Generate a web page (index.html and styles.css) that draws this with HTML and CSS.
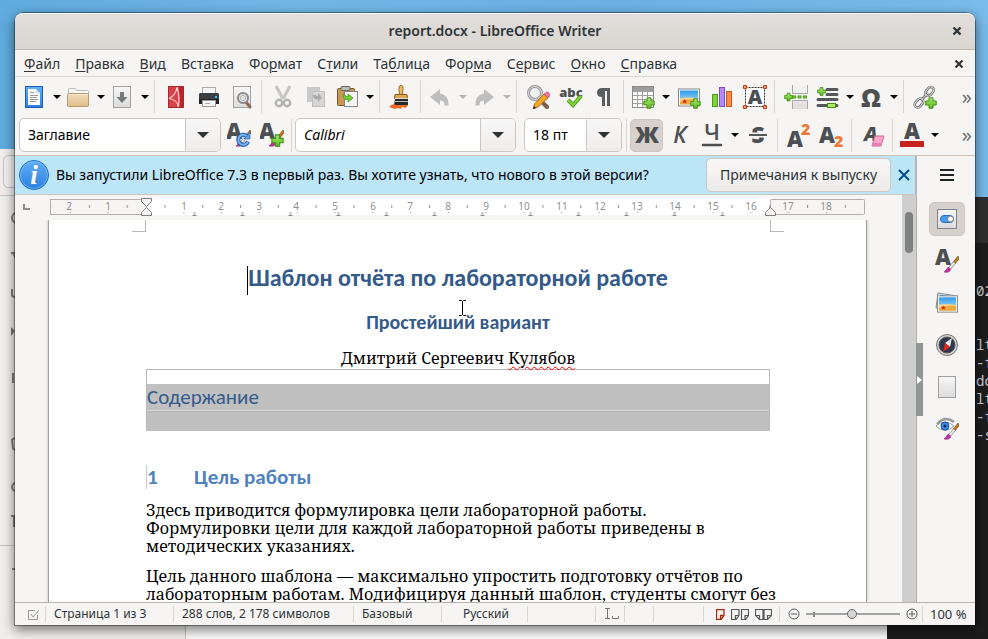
FILE: index.html
```html
<!DOCTYPE html>
<html lang="ru">
<head>
<meta charset="utf-8">
<title>report.docx - LibreOffice Writer</title>
<link rel="stylesheet" href="styles.css">
</head>
<body>
<svg class="defs" width="0" height="0" aria-hidden="true">
  <defs>
    <linearGradient id="g-paper" x1="0" y1="0" x2="0" y2="1"><stop offset="0" stop-color="#fff"/><stop offset="1" stop-color="#e4e4e4"/></linearGradient>
    <linearGradient id="g-gray" x1="0" y1="0" x2="0" y2="1"><stop offset="0" stop-color="#f6f6f6"/><stop offset="1" stop-color="#dcdcdc"/></linearGradient>
    <linearGradient id="g-blue" x1="0" y1="0" x2="0" y2="1"><stop offset="0" stop-color="#62b0f5"/><stop offset="1" stop-color="#2b7fe0"/></linearGradient>
    <linearGradient id="g-sky" x1="0" y1="0" x2="0" y2="1"><stop offset="0" stop-color="#2d9be8"/><stop offset="1" stop-color="#bfe6fa"/></linearGradient>
    <linearGradient id="g-folder" x1="0" y1="0" x2="0" y2="1"><stop offset="0" stop-color="#f3dfbd"/><stop offset="1" stop-color="#dfbd8c"/></linearGradient>
    <linearGradient id="g-green" x1="0" y1="0" x2="0" y2="1"><stop offset="0" stop-color="#a6e86a"/><stop offset="1" stop-color="#5cb81f"/></linearGradient>
    <symbol id="plus" viewBox="0 0 12 12"><path d="M4 .8h4V4h3.200v4H8v3.200H4V8H.8V4H4z" fill="url(#g-green)" stroke="#3f8f14" stroke-width="1"/></symbol>
    <symbol id="brush" viewBox="0 0 16 18"><path d="M15 0 10 6l2 2 4-5z" fill="#c8741a" stroke="#6b3a0c" stroke-width=".6"/><path d="M10 6 5 12l2 2 5-6z" fill="#e8e8e8" stroke="#777" stroke-width=".7"/><path d="M5 12c-2 0-2 3-5 5 3 1 7 0 7-3z" fill="#c22fa5" stroke="#7d1a69" stroke-width=".5"/></symbol>
    <symbol id="beach" viewBox="0 0 22 18"><rect x=".5" y=".5" width="21" height="17" fill="#fff" stroke="#888"/><rect x="2" y="2" width="18" height="14" fill="url(#g-sky)"/><path d="M2 11q9-2 18-1v6H2z" fill="#f0a93c"/><path d="M2 10q5-2 18 0v1q-9-1-18 2z" fill="#f8d38c"/><path d="M6.500 10.500l1 1.500 1.800.2-1.300 1.200.4 1.600-1.900-.8-1.500.8.3-1.700-1.300-1.100 1.700-.3z" fill="#d8331c"/></symbol>
  </defs>
</svg>

<div class="backdrop-files" aria-hidden="true">
  <svg width="15" height="490"><path d="M0 46.500h15M0 396.500h15" stroke="#c9c7c5"/><rect x="3.500" y="6.500" width="24" height="32" rx="5" fill="#f3f1f0" stroke="#c4c0bb"/><g fill="none" stroke="#808080" stroke-width="2"><circle cx="17" cy="69" r="5"/><path d="M11 104h5M13 104l3 5M12 140v6q0 2 3 2M13 224v10M12 291q1-2 6-2v12q-5 0-5-2zM11 367h5M14 368v10M12 420h4"/><circle cx="16" cy="338" r="4"/></g><path d="M11 178l4 4-4 5z" fill="#777"/></svg>
</div>
<div class="backdrop-bottom" aria-hidden="true"></div>
<div class="terminal"><pre>02


lt
-f
do
lt
-f
-s</pre></div>

<main class="window">
  <header class="titlebar">
    <h1>report.docx - LibreOffice Writer</h1>
    <button class="close" aria-label="Закрыть"><svg width="10" height="10"><path d="M1.500 1.500l7 7M8.500 1.500l-7 7" stroke="#2e3436" stroke-width="2.400"/></svg></button>
  </header>
  <nav class="menubar">
    <button><u>Ф</u>айл</button><button><u>П</u>равка</button><button><u>В</u>ид</button><button>Вст<u>а</u>вка</button><button>Фо<u>р</u>мат</button><button>С<u>т</u>или</button><button>Та<u>б</u>лица</button><button>Фор<u>м</u>а</button><button>С<u>е</u>рвис</button><button><u>О</u>кно</button><button><u>С</u>правка</button>
    <button class="close" aria-label="Закрыть документ"><svg width="10" height="10"><path d="M1.500 1.500l7 7M8.500 1.500l-7 7" stroke="#2e3436" stroke-width="2.200"/></svg></button>
  </nav>

  <div class="toolbar toolbar-main">
    <button class="tool split" aria-label="Создать"><svg width="24" height="24"><rect x="3.500" y="1.500" width="17" height="21" fill="url(#g-blue)" stroke="#1b5db0"/><path d="M6 4h8l4 4v12H6z" fill="#fff"/><path d="M14 4v4h4z" fill="#c8dff5"/><path d="M8 7.500h4M8 10.500h8M8 12.500h7M8 14.500h8M8 16.500h6" stroke="#999"/></svg><i></i></button>
    <button class="tool split" aria-label="Открыть"><svg width="24" height="24"><path d="M2.500 10V4.500q0-1 1-1h6l1 2h11q1 0 1 1V10z" fill="#fafafa" stroke="#b9b9b9"/><rect x="1.500" y="8.500" width="21" height="13" rx="1" fill="url(#g-folder)" stroke="#b99766"/><path d="M3 9.500h18" stroke="#faecd4"/></svg><i></i></button>
    <button class="tool split" aria-label="Сохранить"><svg width="24" height="24"><rect x="3.500" y="1.500" width="17" height="21" fill="url(#g-gray)" stroke="#a2a2a2"/><path d="M10 7h4v5h3.500L12 18l-5.500-6H10z" fill="#76797c"/></svg><i></i></button>
    <span class="sep"></span>
    <button class="tool" aria-label="PDF"><svg width="24" height="24"><rect x="4.500" y="1.500" width="15" height="21" fill="#d8434a" stroke="#a3272e"/><path d="M14.500 2h4.500v20h-4.500q2-10 0-20z" fill="#c1222a"/><path d="M5 13.500q7-3 8-11.500M5 13.500q8 1 9.500 8.500M13 2q3 10 1.500 20" fill="none" stroke="#fbd5d5" stroke-width="1.200"/></svg></button>
    <button class="tool" aria-label="Печать"><svg width="24" height="24"><rect x="5.500" y="2.500" width="13" height="8" fill="#f5f5f5" stroke="#aaa"/><path d="M3 8h18q1 0 1 2v9H2v-9q0-2 1-2z" fill="#3b3f42"/><path d="M2 14h20v5H2z" fill="#222426"/><rect x="18" y="11" width="2" height="2" fill="#25c5f5"/><rect x="5.500" y="15.500" width="13" height="6" fill="#f7f7f7" stroke="#999"/><path d="M8 18.500h5" stroke="#aaa"/></svg></button>
    <button class="tool" aria-label="Просмотр печати"><svg width="24" height="24"><rect x="3.500" y="1.500" width="17" height="21" fill="url(#g-gray)" stroke="#a2a2a2"/><path d="M16 17l4 5" stroke="#8b6b56" stroke-width="3" stroke-linecap="round"/><circle cx="13" cy="13" r="5" fill="#ececec" stroke="#8a8a8a" stroke-width="2"/><circle cx="13" cy="13" r="2.500" fill="none" stroke="#aaa"/></svg></button>
    <span class="sep"></span>
    <button class="tool" disabled aria-label="Вырезать"><svg width="24" height="24"><path d="M5 1l7 13M19 1l-7 13" stroke="#c4c4c4" stroke-width="3"/><g fill="none" stroke="#b2b2b2" stroke-width="2.400"><circle cx="8" cy="18" r="3.200"/><circle cx="16" cy="18" r="3.200"/></g></svg></button>
    <button class="tool" disabled aria-label="Копировать"><svg width="24" height="24"><rect x="3" y="2" width="13" height="15" fill="#c9c9c9"/><rect x="8.500" y="6.500" width="12" height="15" fill="#d6d6d6" stroke="#c0c0c0"/><path d="M9 10q0 5 5 4v3l4-4.500L14 8v3q-2 1-2-1z" fill="#aaa"/></svg></button>
    <button class="tool split" aria-label="Вставить"><svg width="24" height="24"><rect x="2.500" y="3.500" width="17" height="17" rx="1" fill="#c99752" stroke="#7b5423"/><rect x="6" y="1.500" width="9" height="4" rx="1" fill="#bbb" stroke="#666"/><rect x="9.500" y="6.500" width="13" height="15" fill="#f4f4f4" stroke="#888"/><path d="M8 10q1 6 5 4v3l5-4-5-4v2.500q-3 1-3-1.500z" fill="#6fd12f" stroke="#3f9113" stroke-width=".7"/></svg><i></i></button>
    <span class="sep"></span>
    <button class="tool" aria-label="Копировать форматирование"><svg width="24" height="24"><path d="M12 .5q2.500 0 2 3L13.500 10h-3L10 3.500q-.5-3 2-3z" fill="#e8bb6b" stroke="#9b6b23"/><path d="M6 9.500h12l.5 4h-13z" fill="#e0a94e" stroke="#8b5f1c"/><path d="M6 13h13v3H6z" fill="#ddd"/><path d="M6 14h13v6H5z" fill="#26282a"/><path d="M6 16h13v1H6z" fill="#bbb"/><path d="M0 22q3-4 7-2h12l-2 3-4-1-1 2-3-1-3 1z" fill="#f06a26"/></svg></button>
    <span class="sep"></span>
    <button class="tool split" disabled aria-label="Отменить"><svg width="24" height="24"><path d="M2 12l10-8v4.500q9 1 8.500 12h-4q.5-5-4.500-5V20z" fill="#bebebe"/></svg><i></i></button>
    <button class="tool split" disabled aria-label="Вернуть"><svg width="24" height="24"><path d="M22 12L12 4v4.500q-9 1-8.500 12h4q-.5-5 4.500-5V20z" fill="#bebebe"/></svg><i></i></button>
    <span class="sep"></span>
    <button class="tool" aria-label="Найти и заменить"><svg width="24" height="24"><path d="M14 15l7 7" stroke="#7b5d50" stroke-width="4" stroke-linecap="round"/><circle cx="9" cy="8" r="6.500" fill="#efefef" stroke="#999" stroke-width="3"/><circle cx="9" cy="8" r="6.500" fill="none" stroke="#ddd"/><path d="M7 24l1.500-5L18 9l4 4L12 22z" fill="#f5a623" stroke="#9a5d10" stroke-width=".8"/><path d="M18 9l2.500-2q3 0 3.500 3.500L22 13z" fill="#f078a8" stroke="#aa3b68" stroke-width=".6"/><path d="M7 24l1-3 2 2z" fill="#222"/></svg></button>
    <button class="tool" aria-label="Орфография"><svg width="24" height="24" overflow="visible"><text x="12" y="12" class="glyph abc" text-anchor="middle">abc</text><path d="M9 15l5 5 8-9" fill="none" stroke="#4f9e18" stroke-width="4"/><path d="M9 15l5 5 8-9" fill="none" stroke="#83d63f" stroke-width="2"/></svg></button>
    <button class="tool" aria-label="Непечатаемые символы"><svg width="24" height="24"><path d="M18 3v18h-3V6h-2v15h-3v-9q-5 0-5-4.500T10 3z" fill="#5a5d60"/></svg></button>
    <span class="sep"></span>
    <button class="tool split" aria-label="Таблица"><svg width="24" height="24"><rect x="1.500" y="1.500" width="21" height="21" fill="#fff" stroke="#8c8c8c"/><path d="M2 2h20v4H2z" fill="#9a9da0"/><path d="M2 6.500h20M2 10.500h20M2 14.500h20M2 18.500h20M6.500 2v20M11.500 2v20M16.500 2v20" stroke="#a0a0a0"/><use href="#plus" x="12" y="12" width="12" height="12"/></svg><i></i></button>
    <button class="tool" aria-label="Изображение"><svg width="24" height="24"><use href="#beach" x="1" y="3" width="22" height="19"/><use href="#plus" x="13" y="13" width="11" height="11"/></svg></button>
    <button class="tool" aria-label="Диаграмма"><svg width="24" height="24"><rect x="2.500" y="9.500" width="5" height="12" fill="#80d040" stroke="#4b9a1c"/><rect x="9.500" y="2.500" width="5" height="19" fill="#b58af5" stroke="#7f50c4"/><rect x="16.500" y="6.500" width="5" height="15" fill="#fa8a45" stroke="#cc5818"/></svg></button>
    <button class="tool" aria-label="Надпись"><svg width="24" height="24"><rect x="2.500" y="2.500" width="19" height="19" fill="#fff" stroke="#333" stroke-dasharray="2 1"/><text x="12" y="19" class="glyph a" text-anchor="middle">A</text><g fill="#f59a70" stroke="#c43d10"><path d="M.5.500h3v3h-3zM20.500.500h3v3h-3zM.5 20.500h3v3h-3zM20.500 20.500h3v3h-3z"/></g></svg></button>
    <span class="sep"></span>
    <button class="tool" aria-label="Разрыв страницы"><svg width="24" height="24"><path d="M8.500 0v8.500h15V0M8.500 24v-8.500h15V24" fill="url(#g-gray)" stroke="#aaa"/><path d="M8 12h16" stroke="#4a9a18" stroke-width="3" stroke-dasharray="4 1.500"/><path d="M9 12h15" stroke="#92dd52" stroke-width="1" stroke-dasharray="2 3.500"/><use href="#plus" x="0" y="7" width="9" height="10"/></svg></button>
    <button class="tool split" aria-label="Поле"><svg width="24" height="24"><path d="M12 4.500h10M12 9.500h10M3 14.500h19M3 20.500h19" stroke="#55585b" stroke-width="3" stroke-linecap="round"/><rect x="12.500" y="18.500" width="8" height="4" fill="#a8ec6d" stroke="#459014"/><use href="#plus" x="2" y="2" width="9" height="9"/></svg><i></i></button>
    <button class="tool split" aria-label="Специальный символ"><svg width="24" height="24"><text x="12" y="22" class="glyph omega" text-anchor="middle">Ω</text></svg><i></i></button>
    <span class="sep"></span>
    <button class="tool" aria-label="Гиперссылка"><svg width="24" height="24"><g fill="none" stroke="#6f7274" stroke-width="2.600"><rect x="-5" y="-3" width="10" height="6" rx="3" transform="translate(6 18) rotate(-50)"/><rect x="-5" y="-3" width="10" height="6" rx="3" transform="translate(16.500 6.500) rotate(-50)"/><path d="M8 15.500l7-7.500"/></g><g fill="none" stroke="#d4d4d4"><rect x="-5" y="-3" width="10" height="6" rx="3" transform="translate(6 18) rotate(-50)"/><rect x="-5" y="-3" width="10" height="6" rx="3" transform="translate(16.500 6.500) rotate(-50)"/><path d="M8 15.500l7-7.500"/></g><use href="#plus" x="12" y="12" width="12" height="12"/></svg></button>
    <button class="more" aria-label="Ещё">»</button>
  </div>

  <div class="toolbar toolbar-format">
    <div class="combo combo-style"><input aria-label="Стиль абзаца" value="Заглавие"><button aria-label="Показать стили"><i></i></button></div>
    <button class="tool" aria-label="Обновить стиль"><svg width="24" height="24"><text x="-1" y="16" class="glyph big">A</text><use href="#brush" x="9" y="7" width="15" height="17"/><path d="M20 13.500a5 5 0 1 0 1 5" fill="none" stroke="#2260b4" stroke-width="4"/><path d="M20 13.500a5 5 0 1 0 1 5" fill="none" stroke="#79b4f5" stroke-width="2"/><path d="M23 9v7h-6z" fill="#5b9de8" stroke="#2260b4" stroke-width=".6"/></svg></button>
    <button class="tool" aria-label="Создать стиль"><svg width="24" height="24"><text x="-1" y="16" class="glyph big">A</text><use href="#brush" x="9" y="7" width="15" height="17"/><use href="#plus" x="11" y="11" width="13" height="13"/></svg></button>
    <span class="sep"></span>
    <div class="combo combo-font"><input aria-label="Гарнитура" value="Calibri"><button aria-label="Показать шрифты"><i></i></button></div>
    <div class="combo combo-size"><input aria-label="Кегль" value="18 пт"><button aria-label="Показать размеры"><i></i></button></div>
    <span class="sep"></span>
    <button class="tool pressed" aria-label="Полужирный"><svg width="24" height="24" overflow="visible"><text x="12" y="20" class="glyph letter" text-anchor="middle">Ж</text></svg></button>
    <button class="tool" aria-label="Курсив"><svg width="24" height="24"><text x="11" y="20" class="glyph letter italic" text-anchor="middle">К</text></svg></button>
    <button class="tool split" aria-label="Подчёркнутый"><svg width="24" height="24"><text x="12" y="17" class="glyph letter plain" text-anchor="middle">Ч</text><path d="M3 22h18" stroke="#4d5052" stroke-width="2.500" stroke-linecap="round"/></svg><i></i></button>
    <button class="tool" aria-label="Зачёркнутый"><svg width="24" height="24"><text x="12" y="20" class="glyph letter" text-anchor="middle">S</text><path d="M3 12h18" stroke="#f6f5f4" stroke-width="5"/><path d="M3 12h18" stroke="#55585b" stroke-width="2"/></svg></button>
    <span class="sep"></span>
    <button class="tool" aria-label="Надстрочный"><svg width="24" height="24" overflow="visible"><text x="0" y="24" class="glyph big">A</text><text x="14" y="12" class="glyph two">2</text></svg></button>
    <button class="tool" aria-label="Подстрочный"><svg width="24" height="24" overflow="visible"><text x="-1" y="20" class="glyph big">A</text><text x="14" y="24" class="glyph two">2</text></svg></button>
    <span class="sep"></span>
    <button class="tool" aria-label="Очистить"><svg width="24" height="24"><text x="3" y="18" class="glyph a italic">A</text><path d="M14 13h9l-3 10h-9z" fill="#f7a5c8" stroke="#d0689a" stroke-linejoin="round"/><path d="M11 20h10l-1 3h-9z" fill="#e87fb0"/></svg></button>
    <span class="sep"></span>
    <button class="tool split" aria-label="Цвет шрифта"><svg width="24" height="24"><text x="12" y="16" class="glyph big" text-anchor="middle">A</text><rect x="0" y="18" width="24" height="6" fill="#c9211e"/></svg><i></i></button>
    <button class="more" aria-label="Ещё">»</button>
  </div>

  <div class="body">
    <div class="content">
      <div class="infobar">
        <svg width="32" height="32"><circle cx="16" cy="16" r="14.500" fill="url(#g-blue)" stroke="#1d6cc9"/><circle cx="16" cy="16" r="13.500" fill="none" stroke="#8cc5f8" stroke-opacity=".6"/><text x="16" y="25" text-anchor="middle" class="info-i">i</text></svg>
        <p>Вы запустили LibreOffice 7.3 в первый раз. Вы хотите узнать, что нового в этой версии?</p>
        <button class="notes">Примечания к выпуску</button>
        <button class="dismiss" aria-label="Закрыть"><svg width="14" height="14"><path d="M2 2l10 10M12 2L2 12" stroke="#004c8c" stroke-width="2"/></svg></button>
      </div>
      <div class="edit">
        <div class="view">
          <svg class="ruler" width="856" height="25">
            <defs>
              <pattern id="half" x="131.500" y="0" width="37.800" height="25" patternUnits="userSpaceOnUse"><path d="M18.500 10v3" stroke="#8f8f8f"/><path d="M37.300 3v1M37.300 17v1" stroke="#999"/></pattern>
              <pattern id="tabs" x="131.500" y="0" width="48" height="25" patternUnits="userSpaceOnUse"><path d="M48 17v4M0 17v4M0 20.500h2M46 20.500h2" stroke="#8a8a8a"/></pattern>
            </defs>
            <path d="M9 9v5h6" stroke="#8f8f8f" stroke-width="2" fill="none"/>
            <rect x="131" y="3" width="624" height="17" fill="#fff"/>
            <rect x="35.500" y="4.500" width="96" height="15" fill="none" stroke="#b0b0b0"/>
            <rect x="755.500" y="4.500" width="94" height="15" rx="1" fill="none" stroke="#b0b0b0"/>
            <rect x="37" y="4" width="810" height="14" fill="url(#half)"/>
            <rect x="150" y="14" width="600" height="8" fill="url(#tabs)"/>
            <g class="ruler-text">
              <text x="54" y="15">2</text><text x="93" y="15">1</text><text x="169" y="15">1</text><text x="206" y="15">2</text><text x="244" y="15">3</text><text x="281" y="15">4</text><text x="320" y="15">5</text><text x="358" y="15">6</text><text x="395" y="15">7</text><text x="433" y="15">8</text><text x="471" y="15">9</text><text x="509" y="15">10</text><text x="547" y="15">11</text><text x="585" y="15">12</text><text x="622" y="15">13</text><text x="660" y="15">14</text><text x="698" y="15">15</text><text x="736" y="15">16</text><text x="773" y="15">17</text><text x="811" y="15">18</text>
            </g>
            <g fill="#f6f5f4" stroke="#7f7f7f"><path d="M126.500 3.500h10v3l-5 5-5-5zM126.500 20.500h10v-3l-5-5-5 5zM750.500 20.500h10v-3l-5-5-5 5z"/></g>
          </svg>
          <div class="canvas">
            <article class="page">
              <div class="corners"><span class="corner"></span><span class="corner right"></span></div>
              <h2 class="doc-title"><span class="caret"></span>Шаблон отчёта по лабораторной работе</h2>
              <p class="doc-subtitle">Простейший вариант</p>
              <p class="doc-author">Дмитрий Сергеевич <span class="misspelt">Кулябов</span></p>
              <section class="toc"><div class="toc-blank"></div><h3>Содержание</h3><div class="toc-body"></div></section>
              <h3 class="doc-heading"><span>1</span>Цель работы</h3>
              <p class="doc-text">Здесь приводится формулировка цели лабораторной работы.<br>Формулировки цели для каждой лабораторной работы приведены в<br>методических указаниях.</p>
              <p class="doc-text">Цель данного шаблона — максимально упростить подготовку отчётов по<br>лабораторным работам. Модифицируя данный шаблон, студенты смогут без</p>
            </article>
          </div>
        </div>
        <div class="scrollbar"><span></span></div>
      </div>
      <svg class="pointer" width="9" height="18"><path d="M1 1.500h2.500l1 1 1-1H8M4.500 2v14M1 16.500h2.500l1-1 1 1H8" fill="none" stroke="#fff" stroke-width="3"/><path d="M1 1.500h2.500l1 1 1-1H8M4.500 2v14M1 16.500h2.500l1-1 1 1H8" fill="none" stroke="#000"/></svg>
    </div>
    <aside class="sidebar">
      <button class="grip" aria-label="Скрыть боковую панель"><svg width="7" height="10"><path d="M1 1l5 4-5 4z" fill="#fff"/></svg></button>
      <button class="deck menu" aria-label="Настройки боковой панели"><svg width="16" height="16"><path d="M1 3h14M1 8h14M1 13h14" stroke="#1e2426" stroke-width="2"/></svg></button>
      <button class="deck active" aria-label="Свойства"><svg width="24" height="24"><rect x="2.500" y="2.500" width="19" height="19" fill="url(#g-gray)" stroke="#808388"/><rect x="5.500" y="8.500" width="13" height="7" rx="3.500" fill="#4a9bf0" stroke="#2a70c2"/><circle cx="15.500" cy="12" r="3" fill="#fff" stroke="#777"/></svg></button>
      <button class="deck" aria-label="Стили"><svg width="24" height="24"><text x="0" y="16" class="glyph big">A</text><use href="#brush" x="9" y="7" width="15" height="17"/></svg></button>
      <button class="deck" aria-label="Галерея"><svg width="24" height="24"><path d="M3 2l19 3v14L1 17z" fill="#eee" stroke="#888"/><path d="M5 3.500l10 1.500H5z" fill="#2d9be8"/><use href="#beach" x="2" y="4" width="21" height="18"/></svg></button>
      <button class="deck" aria-label="Навигатор"><svg width="24" height="24"><circle cx="12" cy="12" r="10.500" fill="#d0d0d0" stroke="#777"/><circle cx="12" cy="12" r="8" fill="#2d3850" stroke="#555"/><path d="M17 5l-2 9-5-4z" fill="#e8e8e8"/><path d="M8 19l2-9 5 4z" fill="#e0281c"/></svg></button>
      <button class="deck" aria-label="Страница"><svg width="24" height="24"><rect x="3.500" y="1.500" width="17" height="21" fill="url(#g-gray)" stroke="#a0a0a0"/></svg></button>
      <button class="deck" aria-label="Инспектор стилей"><svg width="24" height="24"><path d="M1 9q9-8 18 0-9 9-18 0z" fill="#fff" stroke="#999"/><path d="M2 7q8-9 17-2" fill="none" stroke="#9a9a9a" stroke-width="2.500"/><circle cx="10" cy="9" r="4" fill="#3b8ae8" stroke="#1d4f9c"/><circle cx="10" cy="9" r="1.500" fill="#0f2550"/><use href="#brush" x="9" y="6" width="15" height="17"/></svg></button>
    </aside>
  </div>

  <footer class="statusbar">
    <span class="st st-save"><svg width="11" height="11"><path d="M9.500 6v4.500h-9v-9H7M3 5l2 3 6-7" fill="none" stroke="#999"/></svg></span>
    <span class="st st-page">Страница 1 из 3</span>
    <span class="st st-words">288 слов, 2 178 символов</span>
    <span class="st st-style">Базовый</span>
    <span class="st st-lang">Русский</span>
    <span class="st st-ins"></span>
    <span class="st st-sel"><svg width="16" height="12"><path d="M1 .5h5M3.500 1v9M1 10.500h5M8.500 8v2.500h6V8" fill="none" stroke="#777"/></svg></span>
    <span class="st st-sign"></span>
    <span class="st st-fill"></span>
    <span class="st st-views">
      <button aria-label="Одна страница"><svg width="9" height="11"><path d="M.5.500h7.500v6L5 10.500H.5zM8 6.500H4.500v4" fill="none" stroke="#a8280c" stroke-width="1.300"/></svg></button>
      <button aria-label="Несколько страниц"><svg width="18" height="11"><path d="M.5.500h7.500v6L5 10.500H.5zM8 6.500H4.500v4M10.500.500h7v6l-3 4h-4zM17.500 6.500H14v4" fill="none" stroke="#55585b" stroke-width="1.200"/></svg></button>
      <button aria-label="Книга"><svg width="17" height="11"><path d="M.5.500h7.500v10H4.500l-4-4zM.5 6.500h4v4M9 .5h7.500v6l-4 4H9zM16.500 6.500h-4v4" fill="none" stroke="#55585b" stroke-width="1.200"/></svg></button>
    </span>
    <span class="st st-zoom">
      <button aria-label="Уменьшить"><svg width="12" height="12"><circle cx="6" cy="6" r="5" fill="none" stroke="#55585b"/><path d="M3 6h6" stroke="#55585b"/></svg></button>
      <input type="range" min="0" max="100" value="49" aria-label="Масштаб">
      <button aria-label="Увеличить"><svg width="12" height="12"><circle cx="6" cy="6" r="5" fill="none" stroke="#55585b"/><path d="M3 6h6M6 3v6" stroke="#55585b"/></svg></button>
    </span>
    <span class="st st-percent">100 %</span>
  </footer>
</main>
</body>
</html>
```
FILE: styles.css
```css
* { box-sizing: border-box; }
html, body { height: 100%; }
body {
  margin: 0;
  overflow: hidden;
  position: relative;
  background: linear-gradient(90deg, #5fabdd, #72b6e6 30%, #6cb1e3 60%, #79bbea);
  font: 14px/20px "Noto Sans", sans-serif;
  color: #2e3436;
}
button {
  margin: 0;
  padding: 0;
  border: 0;
  background: none;
  font: inherit;
  color: inherit;
}
button svg { display: block; }
.defs { position: absolute; }

/* windows behind */
.backdrop-files {
  position: absolute;
  left: 0;
  top: 149px;
  bottom: 0;
  width: 186px;
  background: #f0efee;
  border-right: 1px solid #c4c2c0;
}
.backdrop-bottom {
  position: absolute;
  left: 186px;
  right: 101px;
  bottom: 0;
  height: 40px;
  background: #fafafa;
}
.terminal {
  position: absolute;
  right: 0;
  top: 197px;
  bottom: 0;
  width: 101px;
  background: #1d1d1d;
  border-top: 46px solid #2f2f2f;
  color: #d0d0d0;
}
.terminal pre {
  margin: 39px 0 0 89px;
  font: 14px/18px "Noto Sans Mono", "DejaVu Sans Mono", monospace;
}

/* window */
.window {
  position: relative;
  display: flex;
  flex-direction: column;
  height: calc(100% - 27px);
  margin: 13px 13px 14px 15px;
  border-radius: 9px 9px 0 0;
  background: #f6f5f4;
  box-shadow: 0 0 0 1px rgba(0, 0, 0, .35), 0 4px 12px 1px rgba(0, 0, 0, .5);
}
.titlebar {
  flex: none;
  height: 37px;
  display: flex;
  align-items: center;
  padding: 0 13px 0 23px;
  border-radius: 8px 8px 0 0;
  border-bottom: 1px solid #bfb8b1;
  background: linear-gradient(#e1dedb, #dad6d2);
  box-shadow: inset 0 1px #f8f7f7;
}
.titlebar h1 {
  flex: 1;
  margin: 0;
  text-align: center;
  font-size: 14px;
  font-weight: 600;
}
.menubar {
  flex: none;
  height: 26px;
  display: flex;
  align-items: center;
  gap: 15px;
  padding: 2px 11px 0 9px;
}
.menubar u { text-decoration-thickness: 1px; text-underline-offset: 2px; }
.menubar .close { margin-left: auto; }

.toolbar { flex: none; display: flex; align-items: center; padding-right: 3px; }
.toolbar-main { height: 41px; padding: 0 3px 1px; border-top: 1px solid #dcdad8; }
.toolbar-format { height: 38px; padding: 0 3px 2px 4px; }
.tool {
  flex: none;
  display: flex;
  align-items: center;
  width: 33px;
  height: 33px;
  padding-left: 6px;
}
.tool.split { width: 44px; padding-left: 4px; }
.tool.pressed {
  padding-left: 4px;
  border: 1px solid #cdc7c2;
  border-radius: 5px;
  background: #d6d1cd;
}
.tool i {
  margin-left: 7px;
  border: 4px solid transparent;
  border-top-color: #000;
  border-bottom-width: 0;
}
.tool:disabled i { border-top-color: #b5b5b5; }
.sep { flex: none; width: 1px; height: 33px; margin: 0 3px 0 4px; background: #d8d5d2; }
.more { margin-left: auto; font-size: 20px; color: #6e7173; }

.glyph { font-family: "Open Sans", sans-serif; font-weight: 800; fill: #4d5052; }
.abc { font-size: 13px; }
.a { font-size: 20px; }
.big { font-size: 22px; }
.omega { font-size: 25px; }
.letter { font-size: 23px; }
.italic { font-style: italic; }
.letter.italic { font-weight: 600; }
.letter.plain { font-weight: 600; font-size: 22px; }
.two { font-size: 16px; fill: #ef7a35; }

.combo {
  flex: none;
  display: flex;
  height: 34px;
  border: 1px solid #cdc7c2;
  border-radius: 5px;
  background: #fff;
  overflow: hidden;
}
.combo input {
  flex: 1;
  min-width: 0;
  padding: 0 8px;
  border: 0;
  outline: 0;
  background: transparent;
  font: inherit;
  color: #000;
}
.combo button {
  flex: none;
  width: 35px;
  display: flex;
  align-items: center;
  justify-content: center;
  border-left: 1px solid #cdc7c2;
  background: linear-gradient(#f8f7f7, #efedec);
}
.combo i { border: 6px solid transparent; border-top-color: #2e3436; border-bottom-width: 0; }
.combo-style { width: 202px; }
.combo-font { width: 221px; margin-right: 8px; }
.combo-font input { font-style: italic; }
.combo-size { width: 98px; }

.body { flex: 1; min-height: 0; display: flex; border-top: 1px solid #cdc3b8; }
.content { flex: 1; min-width: 0; display: flex; flex-direction: column; position: relative; }
.infobar {
  flex: none;
  height: 39px;
  display: flex;
  align-items: center;
  padding: 0 4px 0 3px;
  border-right: 2px solid #b8b4b0;
  border-bottom: 1px solid #cfc6be;
  background: #bde5f8;
  color: #000;
}
.infobar p { flex: 1; margin: 0 0 0 6px; white-space: nowrap; }
.info-i { font: italic bold 27px "Liberation Serif", serif; fill: #fff; }
.notes {
  width: 185px;
  height: 34px;
  border: 1px solid #cdc7c2;
  border-radius: 5px;
  background: linear-gradient(#f8f7f7, #edebe9);
  color: #2e3436;
}
.dismiss { margin-left: 6px; }

.edit { flex: 1; min-height: 0; display: flex; }
.view { flex: 1; min-width: 0; display: flex; flex-direction: column; }
.ruler { flex: none; display: block; }
.ruler-text { font-size: 10px; fill: #8f8f8f; text-anchor: middle; }
.canvas { flex: 1; min-height: 0; overflow: hidden; padding: 0 35px 0 33px; }
.page {
  height: 100%;
  padding: 0 96px 0 97px;
  border: 1px solid #a0a0a0;
  border-width: 0 1px;
  background: #fff;
  box-shadow: 0 0 3px rgba(0, 0, 0, .25);
  color: #000;
  font: 16px/18px "Noto Serif", "Liberation Serif", serif;
  white-space: nowrap;
}
.corners { display: flex; justify-content: space-between; height: 12px; margin: 0 -14px; }
.corner { width: 14px; border: 1px solid #b9b9b9; border-width: 0 1px 1px 0; }
.corner.right { border-width: 0 0 1px 1px; }
.doc-title, .doc-subtitle, .toc h3, .doc-heading { font-family: Carlito, Lato, sans-serif; }
.doc-title {
  margin: 31px 0 0;
  font-size: 24px;
  line-height: 30px;
  text-align: center;
  color: #345a8a;
}
.caret { display: inline-block; width: 1px; height: 29px; margin-left: -1px; vertical-align: middle; background: #000; }
.doc-subtitle {
  margin: 15px 0 0;
  font-size: 20px;
  font-weight: 700;
  line-height: 24px;
  text-align: center;
  color: #345a8a;
}
.doc-author { margin: 14px 0 0; line-height: 20px; text-align: center; }
.misspelt { text-decoration: underline wavy #f00 1px; text-underline-offset: 2px; }
.toc { margin-top: 1px; border: 1px solid #b9b9b9; border-bottom: 0; }
.toc-blank { height: 14px; }
.toc h3 {
  margin: 0;
  background: #c0c0c0;
  border-bottom: 1px solid #dcdcdc;
  font-size: 21px;
  font-weight: 400;
  line-height: 26px;
  color: #345a8a;
}
.toc-body { height: 20px; background: #c0c0c0; border-top: 1px solid #b4b4b4; }
.doc-heading {
  display: flex;
  margin: 34px 0 0;
  font-size: 21px;
  line-height: 24px;
  color: #4f81bd;
}
.doc-heading span { width: 48px; border-left: 1px solid #c8c8c8; }
.doc-text { margin: 12px 0 0; line-height: 18px; }

.scrollbar { flex: none; width: 15px; padding: 17px 3px 0; background: #cecece; border-right: 1px solid #b0b0b0; }
.scrollbar span { display: block; height: 41px; border-radius: 4px; background: #7e8182; }
.pointer { position: absolute; left: 50%; top: 143px; margin-left: -8px; }

.sidebar {
  flex: none;
  width: 58px;
  position: relative;
  display: flex;
  flex-direction: column;
  align-items: center;
  gap: 8px;
  padding: 2px 0 0 2px;
}
.grip {
  position: absolute;
  left: -1px;
  top: 187px;
  width: 7px;
  height: 73px;
  display: flex;
  align-items: center;
  background: #929595;
}
.deck {
  flex: none;
  width: 36px;
  height: 34px;
  display: flex;
  align-items: center;
  justify-content: center;
  border: 1px solid transparent;
  border-radius: 5px;
}
.deck.menu { margin-bottom: 2px; }
.deck.active { border-color: #cdc7c2; background: #d6d1cd; }

.statusbar {
  flex: none;
  height: 23px;
  display: flex;
  align-items: center;
  border-top: 1px solid #b6b3b0;
  font-size: 12px;
  line-height: 16px;
}
.st { flex: none; height: 16px; display: flex; align-items: center; padding-left: 8px; border-right: 1px solid #d8d5d2; white-space: nowrap; }
.st-save { width: 31px; padding-left: 13px; }
.st-page { width: 128px; }
.st-words { width: 180px; }
.st-style { width: 88px; }
.st-lang { width: 86px; padding-left: 21px; }
.st-ins { width: 68px; }
.st-sel { width: 29px; }
.st-sign { width: 29px; }
.st-fill { flex: 1; }
.st-views { width: 76px; padding-left: 12px; gap: 6px; }
.st-zoom { width: 143px; padding-right: 4px; gap: 6px; }
.st-percent { width: 52px; padding-left: 7px; border: 0; font-size: 13px; }
.st-zoom input {
  flex: 1;
  min-width: 0;
  height: 12px;
  margin: 0;
  appearance: none;
  background:
    linear-gradient(#8a8d8f, #8a8d8f) 7px 50% / 2px 5px no-repeat,
    linear-gradient(#a0a3a3, #a0a3a3) 0 50% / 100% 2px no-repeat;
}
.st-zoom input::-webkit-slider-thumb {
  appearance: none;
  width: 10px;
  height: 10px;
  border: 1px solid #66696b;
  border-radius: 50%;
  background: #d5d5d5;
}
```
